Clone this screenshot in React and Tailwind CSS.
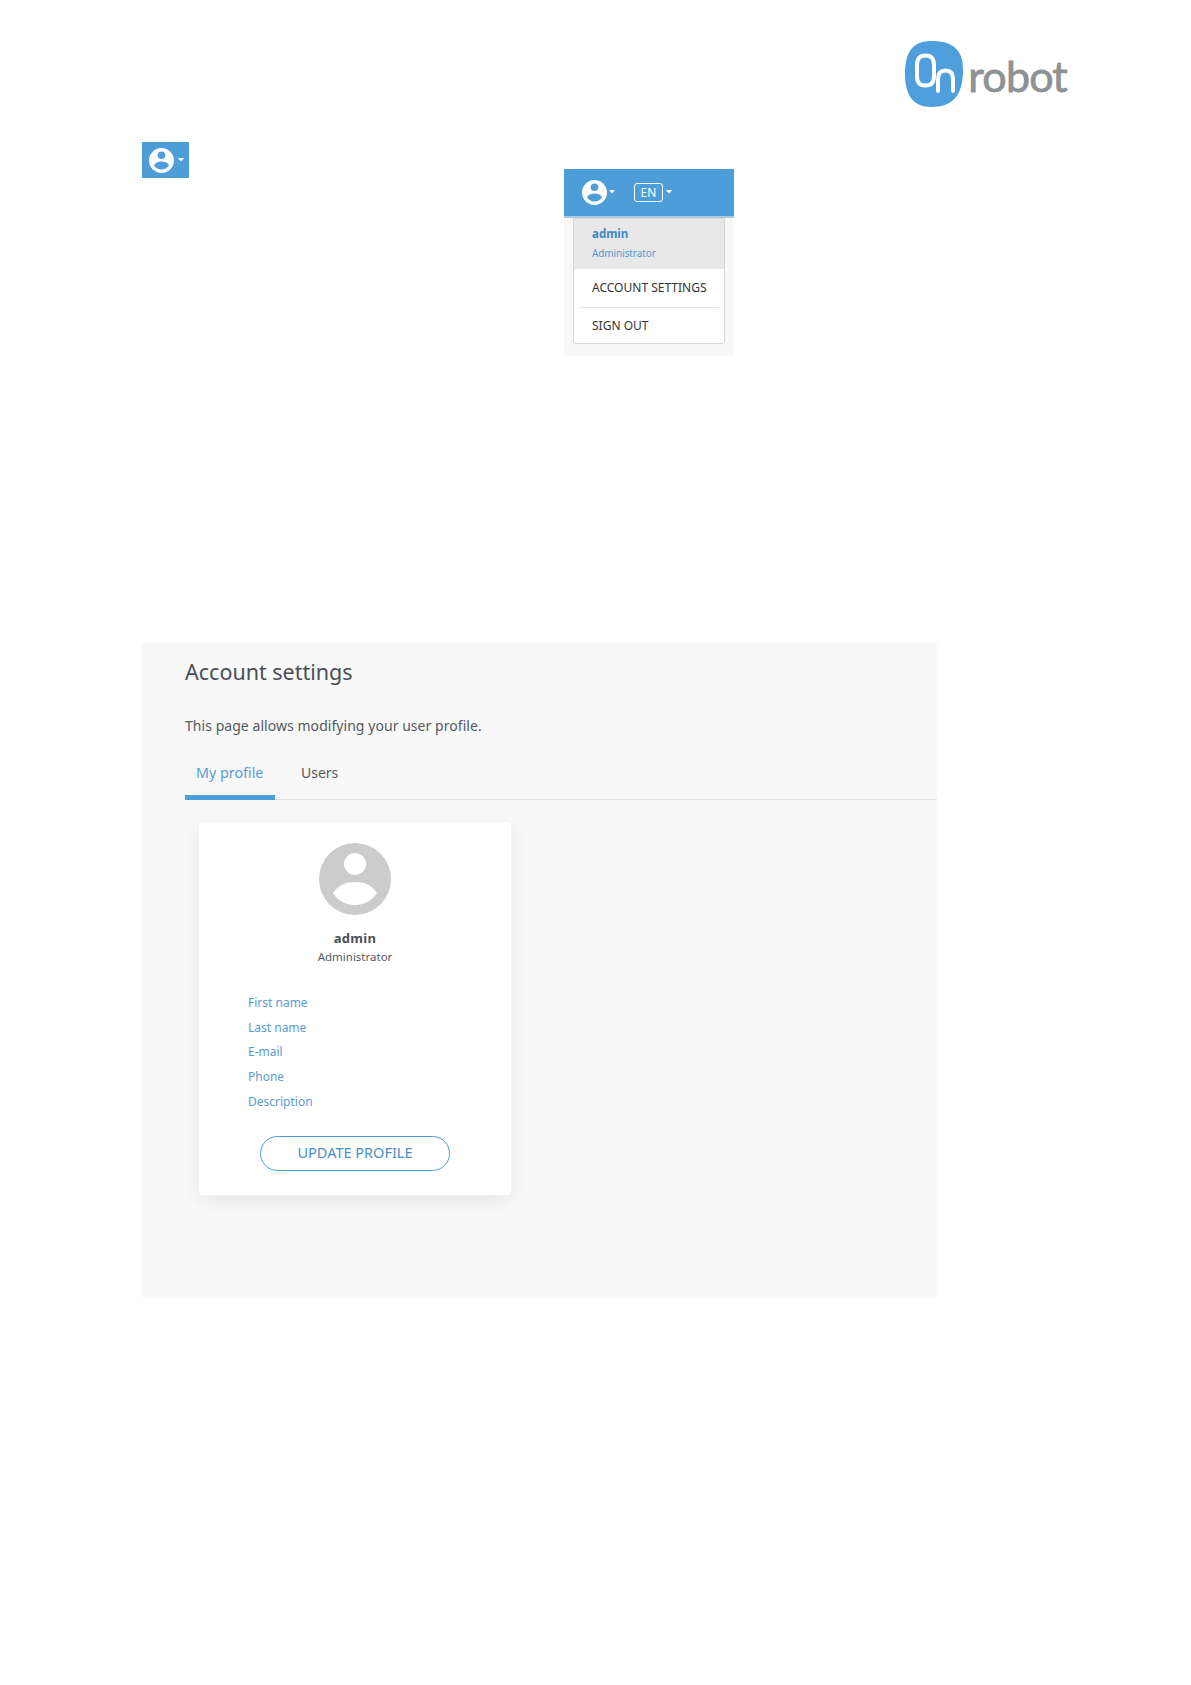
function UserGlyph({ className, disc, cut }) {
  return (
    <svg viewBox="0 0 72 72" className={className}>
      <circle cx="36" cy="36" r="36" fill={disc} />
      <circle cx="36" cy="21" r="11" fill={cut} />
      <path d="M14 50 C19 42 27 39 36 39 C45 39 53 42 58 50 C53 58 45 62 36 62 C27 62 19 58 14 50 Z" fill={cut} />
    </svg>
  );
}

function Caret({ className }) {
  return (
    <svg viewBox="0 0 6 4" className={className}>
      <path d="M0 0 H6 L3 3.5 Z" fill="#ffffff" />
    </svg>
  );
}

function Logo() {
  return (
    <div className="flex items-center">
      <svg viewBox="0 0 58 66" className="w-[58px] h-[66px]">
        <path d="M27 0 C47 0 58 8 58 29 C58 54 48 66 26 66 C8 66 0 54 0 33 C0 10 8 0 27 0 Z" fill="#4f9fdc" />
        <path d="M12 24 C12 17 15 14.5 20.5 14.5 C26 14.5 29 17 29 24 V35 C29 42 26 44.5 20.5 44.5 C15 44.5 12 42 12 35 Z" fill="none" stroke="#ffffff" strokeWidth="4" />
        <path d="M33 50 V38 C33 32 36 29.5 40.5 29.5 C45 29.5 48 32 48 38 V50" fill="none" stroke="#ffffff" strokeWidth="4" strokeLinecap="round" />
      </svg>
      <span className="ml-[5px] mr-[1px] mt-[2px] font-['Lato',sans-serif] text-[43px] leading-none text-[#8d9295] tracking-[-0.8px] [-webkit-text-stroke:0.8px_#8d9295]">robot</span>
    </div>
  );
}

function DropdownShot() {
  return (
    <div className="w-[170px] h-[187px] bg-[#f8f8f8] ml-[375px] mt-[27px]">
      <div className="h-[49px] bg-[#4d9dd9] flex items-center pl-[18px] pb-[1px] border-b-2 border-[#a9c9e2]">
        <UserGlyph className="w-[25px] h-[25px]" disc="#ffffff" cut="#4d9dd9" />
        <Caret className="w-[6px] h-[4px] ml-[2px]" />
        <span className="ml-[19px] w-[29px] h-[19px] border border-white rounded-[3px] text-white text-[12px] leading-[17px] text-center">EN</span>
        <Caret className="w-[6px] h-[4px] ml-[3px]" />
      </div>
      <div className="ml-[9px] w-[152px] h-[126px] bg-white border border-[#d5d5d5] rounded-b-[3px] flex flex-col">
        <div className="h-[50px] bg-[#e8e8e8] pl-[18px] pt-[7px]">
          <div className="text-[11.5px] leading-[16px] font-bold text-[#3f86c2]">admin</div>
          <div className="text-[10px] leading-[14px] mt-[4px] tracking-[-0.1px] text-[#5b98cf]">Administrator</div>
        </div>
        <div className="h-[38px] pl-[18px] flex items-center text-[12px] text-[#333333]">ACCOUNT SETTINGS</div>
        <div className="mx-[5px] border-t border-[#e5e5e5]" />
        <div className="flex-1 pl-[18px] flex items-center text-[12px] text-[#333333]">SIGN OUT</div>
      </div>
    </div>
  );
}

function Card() {
  const fields = ["First name", "Last name", "E-mail", "Phone", "Description"];
  return (
    <div className="ml-[57px] mt-[22px] w-[312px] h-[373px] bg-white rounded-[4px] shadow-[0_5px_18px_rgba(0,0,0,0.07)] flex flex-col items-center pt-[21px]">
      <UserGlyph className="w-[72px] h-[72px]" disc="#cccccc" cut="#ffffff" />
      <div className="mt-[14px] text-[13px] leading-[18px] font-bold tracking-[0.3px] text-[#4a4f54]">admin</div>
      <div className="mt-[1px] text-[11.5px] leading-[18px] text-[#54595e]">Administrator</div>
      <div className="self-start pl-[49px] mt-[28px] flex flex-col gap-[6.7px]">
        {fields.map((f) => (
          <div key={f} className="text-[12px] leading-[18px] text-[#5b9bd1]">{f}</div>
        ))}
      </div>
      <button className="mt-[25px] w-[190px] h-[35px] rounded-full border border-[#4d9dd9] text-[14.5px] text-[#4a8fc9]">UPDATE PROFILE</button>
    </div>
  );
}

export default function App() {
  return (
    <div className="w-[1191px] min-h-[1685px] bg-white font-['Noto_Sans',sans-serif] flow-root">
      <div className="flex justify-end pt-[41px] pr-[123px]">
        <Logo />
      </div>
      <div className="flex items-start pl-[142px] mt-[35px]">
        <div className="w-[47px] h-[36px] bg-[#4d9dd9] flex items-center pl-[7px]">
          <UserGlyph className="w-[25px] h-[25px]" disc="#ffffff" cut="#4d9dd9" />
          <Caret className="w-[6px] h-[4px] ml-[4px]" />
        </div>
        <DropdownShot />
      </div>
      <div className="ml-[142px] mt-[287px] w-[795px] h-[656px] bg-[#f8f8f8] rounded-[3px] flow-root">
        <div className="pl-[43px] pt-[12px]">
          <h1 className="text-[21.5px] leading-[34px] text-[#4a4f54]">Account settings</h1>
          <p className="mt-[27px] text-[14px] leading-[20px] tracking-[0.05px] text-[#54595e]">This page allows modifying your user profile.</p>
        </div>
        <div className="ml-[43px] mt-[26px] flex border-b border-[#e3e3e3] h-[38px]">
          <div className="w-[90px] h-[38px] border-b-[5px] border-[#4d9dd9] pl-[11px] text-[14.3px] leading-[22px] text-[#5b9bd1]">My profile</div>
          <div className="ml-[26px] text-[14px] leading-[22px] text-[#54595e]">Users</div>
        </div>
        <Card />
      </div>
    </div>
  );
}
